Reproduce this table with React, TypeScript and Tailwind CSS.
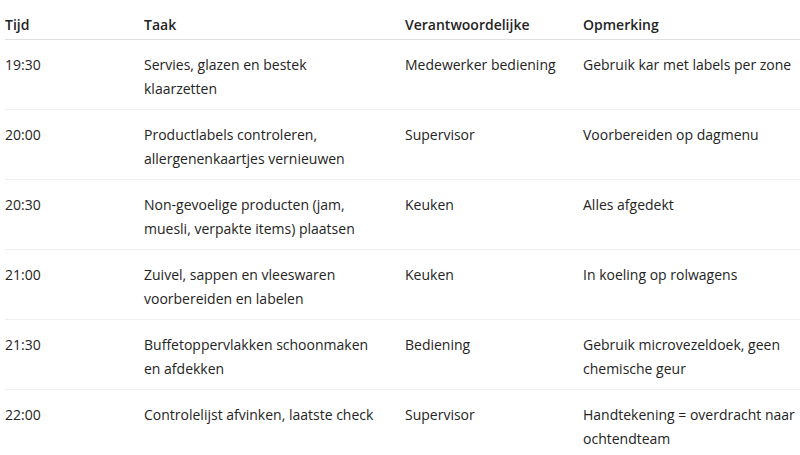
import React from "react";

const rows = [
  ["19:30", "Servies, glazen en bestek klaarzetten", "Medewerker bediening", "Gebruik kar met labels per zone"],
  ["20:00", "Productlabels controleren, allergenenkaartjes vernieuwen", "Supervisor", "Voorbereiden op dagmenu"],
  ["20:30", "Non-gevoelige producten (jam, muesli, verpakte items) plaatsen", "Keuken", "Alles afgedekt"],
  ["21:00", "Zuivel, sappen en vleeswaren voorbereiden en labelen", "Keuken", "In koeling op rolwagens"],
  ["21:30", "Buffetoppervlakken schoonmaken en afdekken", "Bediening", "Gebruik microvezeldoek, geen chemische geur"],
  ["22:00", "Controlelijst afvinken, laatste check", "Supervisor", "Handtekening = overdracht naar ochtendteam"],
];

const pad = ["pr-[16px]", "pr-[30px]", "pr-[8px]", "pr-[2px]"];

export default function App() {
  return (
    <div className="bg-white pl-[5px] overflow-hidden w-[800px] h-[455px]" style={{ fontFamily: '"Open Sans", "Noto Sans", sans-serif' }}>
      <table className="table-fixed border-collapse w-[795px] text-[14px] leading-[24px] text-[#242424]">
        <colgroup>
          <col className="w-[139px]" />
          <col className="w-[261px]" />
          <col className="w-[178px]" />
          <col className="w-[217px]" />
        </colgroup>
        <thead>
          <tr className="border-b border-[#e0e0e0]">
            {["Tijd", "Taak", "Verantwoordelijke", "Opmerking"].map((h, j) => (
              <th key={h} className={`text-left font-semibold pt-[13px] pb-[2px] align-top ${pad[j]}`}>{h}</th>
            ))}
          </tr>
        </thead>
        <tbody>
          {rows.map((r, i) => (
            <tr key={i} className="border-b border-[#f0f0f0]">
              {r.map((c, j) => (
                <td key={j} className={`align-top pt-[13px] pb-[8px] ${pad[j]}`}>{c}</td>
              ))}
            </tr>
          ))}
        </tbody>
      </table>
    </div>
  );
}
